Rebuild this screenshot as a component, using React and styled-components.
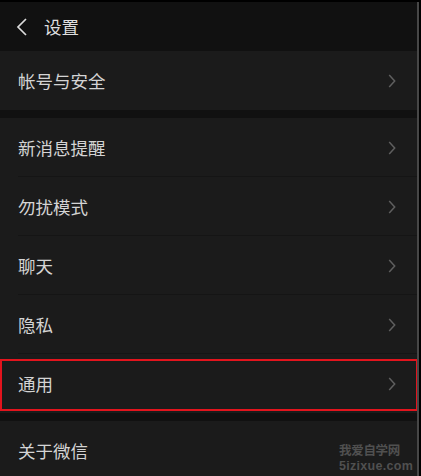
import React from "react";
import styled, { createGlobalStyle } from "styled-components";

const Global = createGlobalStyle`
  html, body { margin: 0; padding: 0; background: #000; overflow: hidden; }
  body { font-family: "Noto Sans CJK SC", "Noto Sans", sans-serif; }
`;

const Screen = styled.div`
  position: relative;
  width: 417px;
  height: 476px;
  margin-top: 2px;
  background: #111111;
  border-right: 2px solid #474747;
  overflow: hidden;
`;

const Header = styled.div`
  height: 49px;
  display: flex;
  align-items: center;
  padding-left: 16px;
  gap: 16px;
  background: #111111;
`;

const Title = styled.span`
  font-size: 17.5px;
  color: #dedede;
  line-height: 1;
`;

const Group = styled.div`
  background: #1b1b1b;
  margin-bottom: ${(p) => p.$gap || 0}px;
`;

const Row = styled.div`
  position: relative;
  height: 59px;
  display: flex;
  align-items: center;
  justify-content: space-between;
  padding: 0 21px 0 18px;
  box-sizing: border-box;
  ${(p) =>
    p.$divider &&
    `&::before {
      content: "";
      position: absolute;
      left: 18px;
      right: 0;
      bottom: 0;
      height: 1px;
      background: #151515;
    }`}
  ${(p) =>
    p.$highlight &&
    `&::after {
      content: "";
      position: absolute;
      left: 0;
      right: -1px;
      top: 5px;
      bottom: 2px;
      border: 2px solid #e3141d;
    }`}
`;

const Label = styled.span`
  font-size: 17.5px;
  color: #d4d4d4;
  line-height: 1;
`;

const Watermark = styled.div`
  position: absolute;
  left: 339px;
  top: 440px;
  display: flex;
  flex-direction: column;
  gap: 1px;
  color: #505050;
  font-weight: 700;
`;

const WmCn = styled.span`
  font-size: 12.5px;
  letter-spacing: -0.3px;
  line-height: 16px;
`;

const WmEn = styled.span`
  font-family: "Liberation Sans", Arial, sans-serif;
  font-size: 12.5px;
  line-height: 15px;
  letter-spacing: 0.3px;
`;

const Back = () => (
  <svg width="12" height="18" viewBox="0 0 12 18">
    <path d="M10 1 L2 9 L10 17" fill="none" stroke="#dcdcdc" strokeWidth="1.7" />
  </svg>
);

const Chevron = () => (
  <svg width="8" height="14" viewBox="0 0 8 14">
    <path d="M1.2 1 L6.7 7 L1.2 13" fill="none" stroke="#5f5f5f" strokeWidth="1.5" />
  </svg>
);

const Item = ({ label, divider, highlight }) => (
  <Row $divider={divider} $highlight={highlight}>
    <Label>{label}</Label>
    <Chevron />
  </Row>
);

export default function App() {
  return (
    <>
      <Global />
      <Screen>
        <Header>
          <Back />
          <Title>设置</Title>
        </Header>
        <Group $gap={8}>
          <Item label="帐号与安全" />
        </Group>
        <Group $gap={8}>
          <Item label="新消息提醒" divider />
          <Item label="勿扰模式" divider />
          <Item label="聊天" divider />
          <Item label="隐私" divider />
          <Item label="通用" highlight />
        </Group>
        <Group>
          <Row>
            <Label>关于微信</Label>
          </Row>
        </Group>
        <Watermark>
          <WmCn>我爱自学网</WmCn>
          <WmEn>5izixue.com</WmEn>
        </Watermark>
      </Screen>
    </>
  );
}
